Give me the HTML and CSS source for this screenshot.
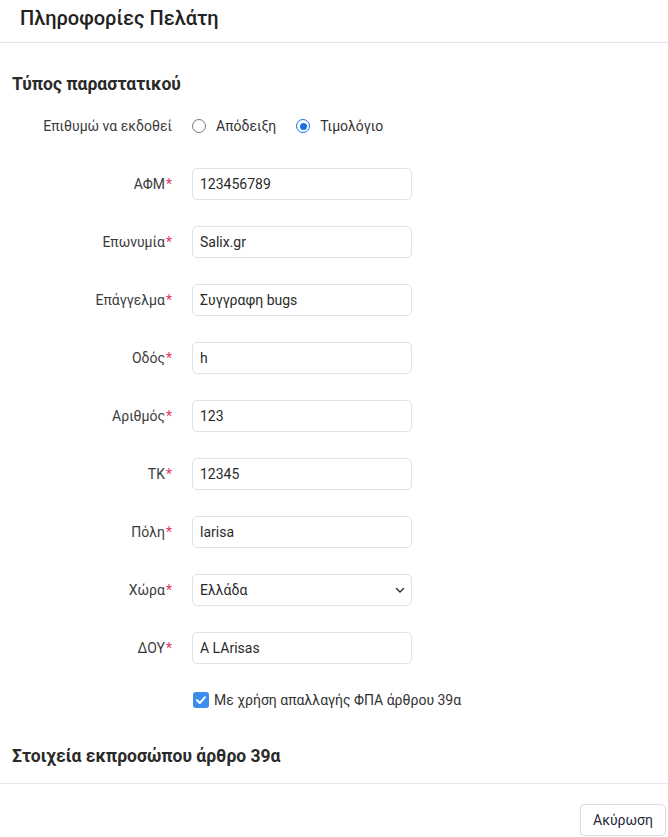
FILE: index.html
```html
<!DOCTYPE html>
<html lang="el">
<head>
<meta charset="utf-8">
<link rel="stylesheet" href="styles.css">
</head>
<body>
<div class="header">Πληροφορίες Πελάτη</div>
<div class="content">
  <h3 class="section-title first">Τύπος παραστατικού</h3>
  <div class="form">
    <div class="row">
      <div class="label">Επιθυμώ να εκδοθεί</div>
      <div class="radios">
        <span class="radio"></span><span class="radio-text">Απόδειξη</span>
        <span class="radio checked"></span><span class="radio-text">Τιμολόγιο</span>
      </div>
    </div>
    <div class="row"><div class="label">ΑΦΜ<span class="req">*</span></div><div class="input">123456789</div></div>
    <div class="row"><div class="label">Επωνυμία<span class="req">*</span></div><div class="input">Salix.gr</div></div>
    <div class="row"><div class="label">Επάγγελμα<span class="req">*</span></div><div class="input">Συγγραφη bugs</div></div>
    <div class="row"><div class="label">Οδός<span class="req">*</span></div><div class="input">h</div></div>
    <div class="row"><div class="label">Αριθμός<span class="req">*</span></div><div class="input">123</div></div>
    <div class="row"><div class="label">ΤΚ<span class="req">*</span></div><div class="input">12345</div></div>
    <div class="row"><div class="label">Πόλη<span class="req">*</span></div><div class="input">larisa</div></div>
    <div class="row"><div class="label">Χώρα<span class="req">*</span></div><div class="input select"><span>Ελλάδα</span><svg class="chev" width="10" height="10" viewBox="0 0 10 10"><path d="M1.5 3.5 L5 7 L8.5 3.5" fill="none" stroke="#333" stroke-width="1.5" stroke-linecap="round" stroke-linejoin="round"/></svg></div></div>
    <div class="row"><div class="label">ΔΟΥ<span class="req">*</span></div><div class="input">A LArisas</div></div>
    <div class="row check-row">
      <div class="label"></div>
      <div class="check-wrap">
        <span class="checkbox"><svg width="16" height="16" viewBox="0 0 16 16"><path d="M4 8.3 L6.8 11 L12 5.2" fill="none" stroke="#fff" stroke-width="2" stroke-linecap="round" stroke-linejoin="round"/></svg></span>
        <span class="check-text">Με χρήση απαλλαγής ΦΠΑ άρθρου 39α</span>
      </div>
    </div>
  </div>
  <h3 class="section-title second">Στοιχεία εκπροσώπου άρθρο 39α</h3>
</div>
<div class="footer">
  <button class="btn">Ακύρωση</button>
</div>
</body>
</html>
```
FILE: styles.css
```css
* { box-sizing: border-box; }
html, body { margin: 0; padding: 0; background: #fff; }
body {
  font-family: Roboto, "Noto Sans", sans-serif;
  color: #333;
  font-size: 14px;
}
.header {
  height: 43px;
  padding: 6px 0 0 20px;
  font-size: 20px;
  font-weight: 500;
  line-height: 24px;
  color: #222;
  border-bottom: 1px solid #dfe4ec;
}
.content {
  padding: 0 12px;
  border-bottom: 1px solid #e6e9ee;
}
.section-title {
  margin: 0;
  font-size: 17.5px;
  font-weight: 700;
  line-height: 24px;
  color: #2a2a2a;
}
.section-title.first { padding-top: 29px; }
.section-title.second { margin-top: 34px; padding-bottom: 15px; }
.form {
  display: flex;
  flex-direction: column;
  margin-top: 14px;
  gap: 26px;
}
.row {
  display: flex;
  align-items: center;
  gap: 20px;
  height: 32px;
}
.label {
  width: 160px;
  text-align: right;
  color: #3c3c3c;
  font-size: 14px;
}
.req { color: #e5365b; margin-left: 1px; }
.radios {
  display: flex;
  align-items: center;
}
.radio {
  width: 14px;
  height: 14px;
  border: 1px solid #7a7a7a;
  border-radius: 50%;
  margin-right: 10px;
  position: relative;
}
.radio.checked {
  border-color: #1a6fe8;
  border-width: 1px;
}
.radio.checked::after {
  content: "";
  position: absolute;
  left: 2.5px;
  top: 2.5px;
  width: 7px;
  height: 7px;
  border-radius: 50%;
  background: #1a6fe8;
}
.radio-text { margin-right: 20px; color: #333; }
.input {
  width: 220px;
  height: 32px;
  border: 1px solid #dde2ea;
  border-radius: 5px;
  padding: 0 7px;
  display: flex;
  align-items: center;
  color: #2a2a2a;
  font-size: 14px;
}
.select { justify-content: space-between; padding-right: 6px; }
.chev { display: block; }
.check-row { height: 20px; }
.check-wrap { display: flex; align-items: center; }
.checkbox {
  width: 16px;
  height: 16px;
  border-radius: 3px;
  background: #3b8ded;
  margin-left: 1px;
  margin-right: 5px;
  display: block;
}
.checkbox svg { display: block; }
.check-text { color: #333; }
.footer {
  display: flex;
  justify-content: flex-end;
  padding: 20px 2px 0 0;
}
.btn {
  font-family: Roboto, "Noto Sans", sans-serif;
  font-size: 14px;
  color: #1f2a3a;
  background: #fff;
  border: 1px solid #d9dde3;
  border-radius: 5px;
  height: 32px;
  width: 86px;
  padding: 0;
  box-shadow: 0 1px 2px rgba(0,0,0,0.08);
}
```
